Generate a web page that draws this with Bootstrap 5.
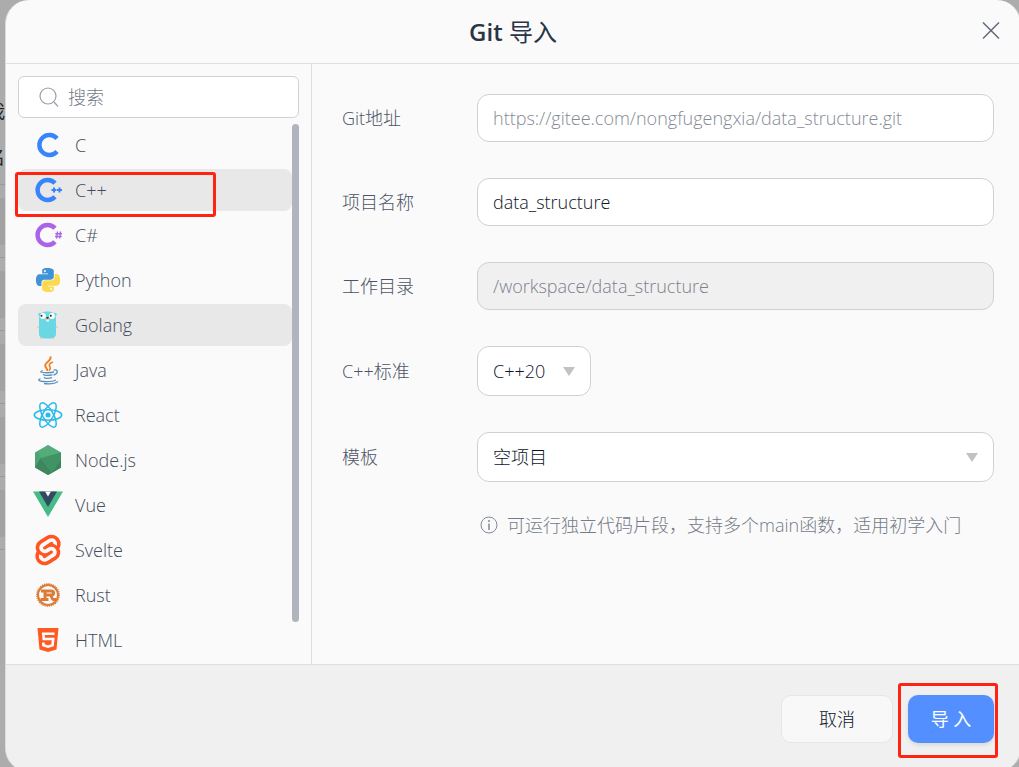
<!DOCTYPE html>
<html lang="zh-CN">
<head>
<meta charset="utf-8">
<meta name="viewport" content="width=device-width, initial-scale=1">
<title>Git 导入</title>
<link href="https://cdn.jsdelivr.net/npm/bootstrap@5.3.0/dist/css/bootstrap.min.css" rel="stylesheet">
<style>
  body {
    background: #acacac;
    font-family: "Open Sans", "Noto Sans CJK SC", sans-serif;
    font-size: 18px;
    font-weight: 300;
    line-height: 26px;
    color: #4c5365;
    overflow: hidden;
  }
  /* page under the dialog */
  .under-page { width: 40px; left: -13px; top: 98px; color: #222; font-weight: 400; z-index: -1; }
  .under-page p { margin: 0 0 20px; }
  .under-page p + p { margin-bottom: 14px; }
  .under-row { height: 73px; border-top: 1px solid #999; padding-top: 13px; }
  .under-row span { display: block; height: 47px; background: #a1a2a1; border-radius: 10px; }
  .dialog { margin: 0 -2px -5px 5px; min-height: calc(100vh + 5px); background: #fafafa; border: 1px solid #dcdcdc; border-top: 0; border-radius: 24px; overflow: hidden; }
  .dialog-head { height: 64px; border-bottom: 1px solid #dfdfdf; }
  .dialog-head h1 { font-size: 24px; line-height: 32px; font-weight: 400; color: #2a3447; }
  .dialog-head h1 span { font-weight: 600; }
  .close-x { right: 18px; top: 20px; width: 22px; height: 22px; }
  .side { width: 306px; padding: 12px 12px 0; border-right: 1px solid #dfdfdf; }
  .search-box { height: 42px; background: #fff; border: 1px solid #d0d1d3; border-radius: 6px; padding-left: 19px; gap: 8px; }
  .search-box input { border: 0; outline: 0; background: none; font-weight: 300; width: 180px; padding: 0; }
  .search-box input::placeholder { color: #757b88; opacity: 1; }
  .lang-scroll { margin-top: 6px; }
  .langs { gap: 3px; padding-bottom: 2px; }
  .lang { height: 42px; border: 0; border-radius: 8px; background: none; padding: 0 16px; gap: 13px; color: #444b5d; font-weight: 300; text-align: left; position: relative; }
  .lang.on { background: #e8e8e8; }
  .lang svg { width: 28px; height: 28px; flex: none; overflow: visible; }
  .thumb { width: 7px; height: 498px; border-radius: 4px; background: #b1b4bd; }
  .ring { position: absolute; border: 3px solid #ff2312; border-radius: 3px; pointer-events: none; }
  .ring-lang { left: -3px; top: 3px; width: 201px; height: 45px; z-index: 1; }
  .ring-ok { left: -10px; top: -12px; right: -4px; bottom: -15px; }
  .fields { padding: 30px 26px 24px 30px; gap: 36px; }
  .field { display: flex; align-items: center; }
  .field label { width: 135px; flex: none; }
  .field .form-control, .field .form-select {
    height: 48px; border: 1px solid #d0d1d3; border-radius: 12px; padding: 0 15px;
    font-size: 18px; font-weight: 300; color: #0c1428; background-color: #fff;
  }
  .field .form-select {
    height: 50px;
    --bs-form-select-bg-img: url("data:image/svg+xml,%3csvg xmlns='http://www.w3.org/2000/svg' viewBox='0 0 12 10'%3e%3cpath fill='%23c2c2c2' d='M0 1h12L6 10z'/%3e%3c/svg%3e");
    background-image: var(--bs-form-select-bg-img);
    background-size: 12px 10px; background-position: right 15px center;
  }
  .field .std { width: 114px; }
  .field .form-control::placeholder { color: #858a96; opacity: 1; }
  .field .form-control:disabled { background: #f0f0f0; color: #7c818d; }
  .hint { margin: -6px 0 0 138px; color: #747a88; gap: 9px; }
  .dialog-foot { background: #f0f0f0; border-top: 1px solid #dddfe5; padding: 30px 26px 28px; gap: 15px; }
  .dialog-foot .btn { height: 48px; border-radius: 10px; font-size: 18px; line-height: 26px; padding: 0; font-weight: 300; }
  .dialog-foot .btn-no { width: 112px; background: #f8f8f8; border-color: #e6e6e8; color: #0c1428; }
  .dialog-foot .btn-ok { width: 86px; background: #548fff; border: 0; color: #fff; font-weight: 400; box-shadow: 0 2px 4px #0000001a; }
</style>
</head>
<body>
<div class="under-page position-absolute" aria-hidden="true">
  <p>我</p><p>名</p>
  <div class="under-rows">
    <div class="under-row"><span></span></div><div class="under-row"><span></span></div><div class="under-row"><span></span></div><div class="under-row"><span></span></div><div class="under-row"><span></span></div><div class="under-row"></div>
  </div>
</div>
<main class="dialog d-flex flex-column" role="dialog" aria-labelledby="title">
  <header class="dialog-head position-relative d-flex align-items-center justify-content-center">
    <h1 id="title" class="m-0"><span>Git</span> 导入</h1>
    <button class="close-x btn border-0 p-0 position-absolute d-flex" aria-label="关闭">
      <svg width="22" height="22" fill="none" stroke="#626a79" stroke-width="1.5"><path d="M3 2.500l16 16M19 2.500L3 18.500"/></svg>
    </button>
  </header>
  <div class="d-flex flex-grow-1">
    <nav class="side flex-shrink-0">
      <div class="search-box d-flex align-items-center">
        <svg width="22" height="22" fill="none" stroke="#9a9ea8" stroke-width="1.2"><circle cx="10" cy="10" r="8"/><path d="M16 16l4 4.500"/></svg>
        <input type="search" placeholder="搜索" aria-label="搜索">
      </div>
      <div class="lang-scroll d-flex">
        <div class="langs d-flex flex-column flex-grow-1">
          <button class="lang d-flex align-items-center"><svg viewBox="0 0 28 28" fill="none" stroke="#3784fb" stroke-width="4.4"><path d="M23 7.500a10 10 0 1 0 0 13"/></svg>C</button>
          <button class="lang on d-flex align-items-center"><svg viewBox="0 0 28 28" fill="none" stroke="#3784fb"><path stroke-width="4.4" d="M21 7.300a10 10 0 1 0 0 13.400"/><path stroke-width="2" d="M17.500 14h5M20 11.500v5M23 14h5M25.500 11.500v5"/></svg>C++<span class="ring ring-lang"></span></button>
          <button class="lang d-flex align-items-center"><svg viewBox="0 0 28 28" fill="none" stroke="#ab64e8"><path stroke-width="4.400" d="M21 7.300a10 10 0 1 0 0 13.400"/><path stroke-width="1.400" d="M23.500 10.500l-.8 7M26.500 10.500l-.8 7M21.300 12.700h6.700M21 15.500h6.700"/></svg>C#</button>
          <button class="lang d-flex align-items-center"><svg viewBox="-2 -2 28 28"><defs><path id="py" fill-rule="evenodd" d="M14.250.18l.9.2.73.26.59.3.45.32.34.34.25.34.16.33.1.3.04.26.02.2-.01.13V8.500l-.05.63-.13.55-.21.46-.26.38-.3.31-.33.25-.35.19-.35.14-.33.1-.3.07-.26.04-.21.02H8.770l-.69.05-.59.14-.5.22-.41.27-.33.32-.27.35-.2.36-.15.37-.1.35-.07.32-.04.27-.02.21v3.060H3.170l-.21-.03-.28-.07-.32-.12-.35-.18-.36-.26-.36-.36-.35-.46-.32-.59-.28-.73-.21-.88-.14-1.050-.05-1.230.06-1.220.16-1.040.24-.87.32-.71.36-.57.4-.44.42-.33.42-.24.4-.16.36-.1.32-.05.24-.01h.16l.06.01h8.160v-.83H6.180l-.01-2.750-.02-.37.05-.34.11-.31.17-.28.25-.26.31-.23.38-.2.44-.18.51-.15.58-.12.64-.1.71-.06.77-.04.84-.02 1.270.05zM8.900 2a1.070 1.070 0 1 0 .01 0z"/></defs><use href="#py" fill="#3f93d6"/><use href="#py" fill="#fcd94f" transform="rotate(180 12 12)"/></svg>Python</button>
          <button class="lang on d-flex align-items-center"><svg viewBox="0 0 28 28"><g fill="#f3c9a5"><ellipse cx="4.500" cy="16" rx="1.500" ry="1"/><ellipse cx="22.500" cy="16" rx="1.500" ry="1"/><ellipse cx="7.500" cy="27" rx="1.500" ry="1"/><ellipse cx="19" cy="27" rx="1.500" ry="1"/></g><circle cx="6" cy="3.500" r="1.700" fill="#6ad7e5"/><circle cx="21" cy="3.500" r="1.700" fill="#6ad7e5"/><path fill="#6ad7e5" d="M5 8c0-5 3-7.500 8.500-7.500S22 3 22 8v15c0 3-2.500 4.500-8.500 4.500S5 26 5 23z"/><circle cx="9" cy="5" r="2.900" fill="#fff"/><circle cx="18" cy="5" r="2.900" fill="#fff"/><circle cx="7.500" cy="4.700" r="1" fill="#222"/><circle cx="16.800" cy="4.700" r="1" fill="#222"/><path fill="#fff" d="M12.300 8h2.600v2.500h-2.600z"/><ellipse cx="13.500" cy="8" rx="2.300" ry="1.300" fill="#edc9a7"/><ellipse cx="13.500" cy="6.900" rx="1.300" ry=".8" fill="#222"/></svg>Golang</button>
          <button class="lang d-flex align-items-center"><svg viewBox="0 0 28 28" fill="none" stroke="#5b91bd" stroke-width="1.300"><path stroke="#ee8324" stroke-width="2" d="M16.300.5c2 4.500-6 5.500-5 9.500.4 2 2.500 3 2 5"/><path stroke="#ee8324" stroke-width="1.700" d="M19 6c-4.500 1.500-4 3.500-3 5 .8 1.400-.2 2.700-1 3.500"/><path d="M9 14.500c-3 1-4 2 2 2.200 4 .2 7-.2 9-.7M9.500 18c-1 1.500 5 2 9 .6M10.500 21c-1 1.600 4 1.800 7.500.6M19.500 14.200c5-1.400 5 3.300 0 5M6.500 22.500C-1 25.500 17 27 22 24M10 27.500c5 .6 11 .2 14-2"/></svg>Java</button>
          <button class="lang d-flex align-items-center"><svg viewBox="0 0 28 28" fill="none" stroke="#27b9ec" stroke-width="1.500"><circle cx="14" cy="14" r="2.500" fill="#27b9ec" stroke="none"/><ellipse cx="14" cy="14" rx="13.700" ry="5.200"/><ellipse cx="14" cy="14" rx="13.700" ry="5.200" transform="rotate(60 14 14)"/><ellipse cx="14" cy="14" rx="13.700" ry="5.200" transform="rotate(120 14 14)"/></svg>React</button>
          <button class="lang d-flex align-items-center"><svg viewBox="0 0 28 28"><path fill="#4da373" d="M14-1l13 7.500v15L14 29 1 21.500v-15z"/><path fill="#3f865f" d="M1 21.500L6.500 12 18 27l-4 2z"/><path fill="#3b8a60" d="M27 6.500v15L18 27 7 12z" opacity=".65"/><path fill="#2f7653" d="M27 14v7.500L18 27z" opacity=".5"/><path fill="#5bb583" d="M14-1l13 7.500L7 12 4 5z" opacity=".5"/></svg>Node.js</button>
          <button class="lang d-flex align-items-center"><svg viewBox="0 0 28 28"><path fill="#47ba87" d="M-1 .5h30L14 26z"/><path fill="#35495e" d="M5 .5h18l-9 15.500z"/><path fill="#fafafa" d="M11 .5h6L14 5.500z"/></svg>Vue</button>
          <button class="lang d-flex align-items-center"><svg viewBox="1 1 22 22"><path fill="#ff5521" d="M10.354 21.125a4.440 4.440 0 0 1-4.765-1.767 4.109 4.109 0 0 1-.703-3.107 3.898 3.898 0 0 1 .134-.522l.105-.321.287.21a7.210 7.210 0 0 0 2.186 1.092l.208.063-.02.208a1.253 1.253 0 0 0 .226.83 1.337 1.337 0 0 0 1.435.533 1.231 1.231 0 0 0 .343-.15l5.590-3.562a1.164 1.164 0 0 0 .524-.778 1.242 1.242 0 0 0-.211-.937 1.338 1.338 0 0 0-1.435-.533 1.230 1.230 0 0 0-.343.15l-2.133 1.360a4.078 4.078 0 0 1-1.135.499 4.440 4.440 0 0 1-4.765-1.766 4.108 4.108 0 0 1-.702-3.108 3.855 3.855 0 0 1 1.742-2.582l5.589-3.563a4.072 4.072 0 0 1 1.135-.499 4.440 4.440 0 0 1 4.765 1.767 4.109 4.109 0 0 1 .703 3.107 3.943 3.943 0 0 1-.134.522l-.105.321-.286-.21a7.204 7.204 0 0 0-2.187-1.093l-.208-.063.02-.207a1.255 1.255 0 0 0-.226-.831 1.337 1.337 0 0 0-1.435-.532 1.231 1.231 0 0 0-.343.15L8.620 9.368a1.162 1.162 0 0 0-.524.778 1.240 1.240 0 0 0 .211.937 1.338 1.338 0 0 0 1.435.533 1.235 1.235 0 0 0 .344-.151l2.132-1.360a4.067 4.067 0 0 1 1.135-.498 4.440 4.440 0 0 1 4.765 1.766 4.108 4.108 0 0 1 .702 3.108 3.857 3.857 0 0 1-1.742 2.583l-5.589 3.562a4.072 4.072 0 0 1-1.135.499m10.358-17.950C18.484-.015 14.082-.96 10.900 1.068L5.310 4.630a6.412 6.412 0 0 0-2.896 4.295 6.753 6.753 0 0 0 .666 4.336 6.430 6.430 0 0 0-.96 2.396 6.833 6.833 0 0 0 1.168 5.167c2.229 3.190 6.630 4.135 9.812 2.108l5.590-3.562a6.410 6.410 0 0 0 2.896-4.295 6.756 6.756 0 0 0-.665-4.336 6.429 6.429 0 0 0 .958-2.396 6.831 6.831 0 0 0-1.167-5.168z"/></svg>Svelte</button>
          <button class="lang d-flex align-items-center"><svg viewBox="0 0 28 28" fill="none" stroke="#dc7a37"><circle cx="14" cy="14" r="10" stroke-width="2"/><circle cx="14" cy="14" r="11.300" stroke-width="1.200" stroke-dasharray="1.200 1.020"/><path stroke-width="3" d="M7 10h10c3.500 0 3.500 4 0 4h-6M11 10v8M6.500 18.500h8M16 14.500c2.500 0 1 4 3.500 4h2.500"/></svg>Rust</button>
          <button class="lang d-flex align-items-center"><svg viewBox="0 0 28 28"><path fill="#ff5a22" d="M3.500 2h21l-2 21.500L14 26l-8.500-2.500z"/><path fill="none" stroke="#fff" stroke-width="2.600" d="M20.500 7.800H9.300l.5 5.200h9.400l-.7 6.300-4.500 1.400-4.500-1.400-.3-2.800"/></svg>HTML</button>
        </div>
        <div class="thumb"></div>
      </div>
    </nav>
    <form class="fields d-flex flex-column flex-grow-1">
      <div class="field"><label for="url">Git地址</label><input id="url" class="form-control" placeholder="https://gitee.com/nongfugengxia/data_structure.git"></div>
      <div class="field"><label for="name">项目名称</label><input id="name" class="form-control" value="data_structure"></div>
      <div class="field"><label for="dir">工作目录</label><input id="dir" class="form-control" value="/workspace/data_structure" disabled></div>
      <div class="field"><label for="std">C++标准</label><select id="std" class="form-select std"><option>C++20</option></select></div>
      <div class="field"><label for="tpl">模板</label><select id="tpl" class="form-select"><option>空项目</option></select></div>
      <div class="hint d-flex align-items-center">
        <svg width="18" height="18" fill="none" stroke="#858a97"><circle cx="9" cy="9" r="8"/><path stroke-width="1.500" d="M9 7.500V14M9 4v2"/></svg>
        <span>可运行独立代码片段，支持多个main函数，适用初学入门</span>
      </div>
    </form>
  </div>
  <footer class="dialog-foot d-flex justify-content-end">
    <button class="btn btn-no">取消</button>
    <button class="btn btn-ok position-relative">导 入<span class="ring ring-ok"></span></button>
  </footer>
</main>
<script src="https://cdn.jsdelivr.net/npm/bootstrap@5.3.0/dist/js/bootstrap.bundle.min.js"></script>
</body>
</html>
